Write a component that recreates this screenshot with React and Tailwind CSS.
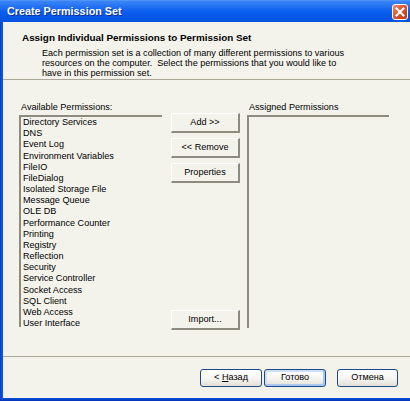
import React from 'react';

const available = [
  'Directory Services',
  'DNS',
  'Event Log',
  'Environment Variables',
  'FileIO',
  'FileDialog',
  'Isolated Storage File',
  'Message Queue',
  'OLE DB',
  'Performance Counter',
  'Printing',
  'Registry',
  'Reflection',
  'Security',
  'Service Controller',
  'Socket Access',
  'SQL Client',
  'Web Access',
  'User Interface',
];

function ClassicButton({ children, className = '' }) {
  return (
    <button
      className={`w-[69px] h-[20px] flex items-center justify-center border-t border-l border-white border-r-2 border-b-2 border-r-[#8d8b80] border-b-[#8d8b80] text-[9.1px] leading-none text-black ${className}`}
    >
      {children}
    </button>
  );
}

function XpButton({ children, focused, className = '' }) {
  return (
    <button
      className={`h-[18px] flex items-center justify-center rounded-[3px] border border-[#1c4a86] bg-gradient-to-b from-white via-[#f7f6f2] to-[#e2e0d6] text-[9.1px] leading-none text-black ${
        focused ? 'shadow-[inset_-2px_-2px_0_#a9c6f5,inset_2px_2px_0_#cfdff8]' : ''
      } ${className}`}
    >
      <span className="whitespace-pre">{children}</span>
    </button>
  );
}

export default function App() {
  return (
    <div className="w-[410px] h-[401px] flex flex-col overflow-hidden bg-[#f3f2eb] font-['Liberation_Sans',Arial,sans-serif] text-black">
      {/* title bar */}
      <div className="h-[22px] shrink-0 flex items-center justify-between bg-gradient-to-b from-[#3a86f7] via-[#0b5eef] to-[#0652df] border-t border-[#4d93f8]">
        <span className="pl-[7px] text-[10.8px] font-bold text-white leading-none [text-shadow:1px_1px_0_#0b2d8c]">
          Create Permission Set
        </span>
        <div className="mr-[2px] w-[16px] h-[16px] rounded-[3px] border border-white bg-gradient-to-br from-[#ec8a6a] via-[#d9532e] to-[#b8381a] flex items-center justify-center">
          <svg width="10" height="10" viewBox="0 0 10 10">
            <path d="M1.5 1.5 L8.5 8.5 M8.5 1.5 L1.5 8.5" stroke="white" strokeWidth="2" strokeLinecap="square" />
          </svg>
        </div>
      </div>

      <div className="flex-1 flex min-h-0">
        {/* left window frame */}
        <div className="w-[3px] shrink-0 bg-gradient-to-r from-[#0840c4] to-[#0a5cec]" />

        <div className="flex-1 flex flex-col min-w-0">
          {/* header */}
          <div className="h-[57px] shrink-0 overflow-hidden pl-[19px] pt-[10px]">
            <div className="text-[9.9px] font-bold leading-[12px]">
              Assign Individual Permissions to Permission Set
            </div>
            <div className="ml-[20px] mt-[4px] text-[9.1px] leading-[10px] whitespace-nowrap">
              <div>Each permission set is a collection of many different permissions to various</div>
              <div>resources on the computer.&nbsp; Select the permissions that you would like to</div>
              <div>have in this permission set.</div>
            </div>
          </div>
          <div className="h-px shrink-0 bg-[#aca899]" />

          {/* body */}
          <div className="h-[276px] shrink-0 flex pl-[16px]">
            <div className="flex flex-col pt-[22px]">
              <div className="pl-[2px] text-[9.1px] leading-[11px]">Available Permissions:</div>
              <div className="mt-[2px] w-[143px] h-[212px] overflow-hidden border-t-2 border-l-2 border-[#8d8b80] pl-[2px]">
                {available.map(p => (
                  <div key={p} className="text-[9.1px] leading-[11.17px] whitespace-nowrap">{p}</div>
                ))}
              </div>
            </div>

            <div className="ml-[9px] h-[250px] flex flex-col gap-[5px] pt-[33px]">
              <ClassicButton>Add &gt;&gt;</ClassicButton>
              <ClassicButton>&lt;&lt; Remove</ClassicButton>
              <ClassicButton>Properties</ClassicButton>
              <ClassicButton className="mt-auto">Import...</ClassicButton>
            </div>

            <div className="ml-[7px] flex flex-col pt-[22px]">
              <div className="pl-[2px] text-[9.1px] leading-[11px]">Assigned Permissions</div>
              <div className="mt-[2px] w-[142px] h-[213px] border-t-2 border-l-2 border-[#8d8b80]" />
            </div>
          </div>

          <div className="h-px shrink-0 bg-[#aca899]" />

          {/* footer */}
          <div className="flex-1 flex items-start justify-end pt-[12px] pr-[12px]">
            <XpButton className="w-[62px]">
              {'< '}<span className="underline">Н</span>азад
            </XpButton>
            <XpButton focused className="w-[62px] ml-[2px]">Готово</XpButton>
            <XpButton className="w-[61px] ml-[11px]">Отмена</XpButton>
          </div>
        </div>
      </div>

      {/* bottom window frame */}
      <div className="h-[3px] shrink-0 bg-gradient-to-b from-[#0a4fd8] to-[#0633b8]" />
    </div>
  );
}
